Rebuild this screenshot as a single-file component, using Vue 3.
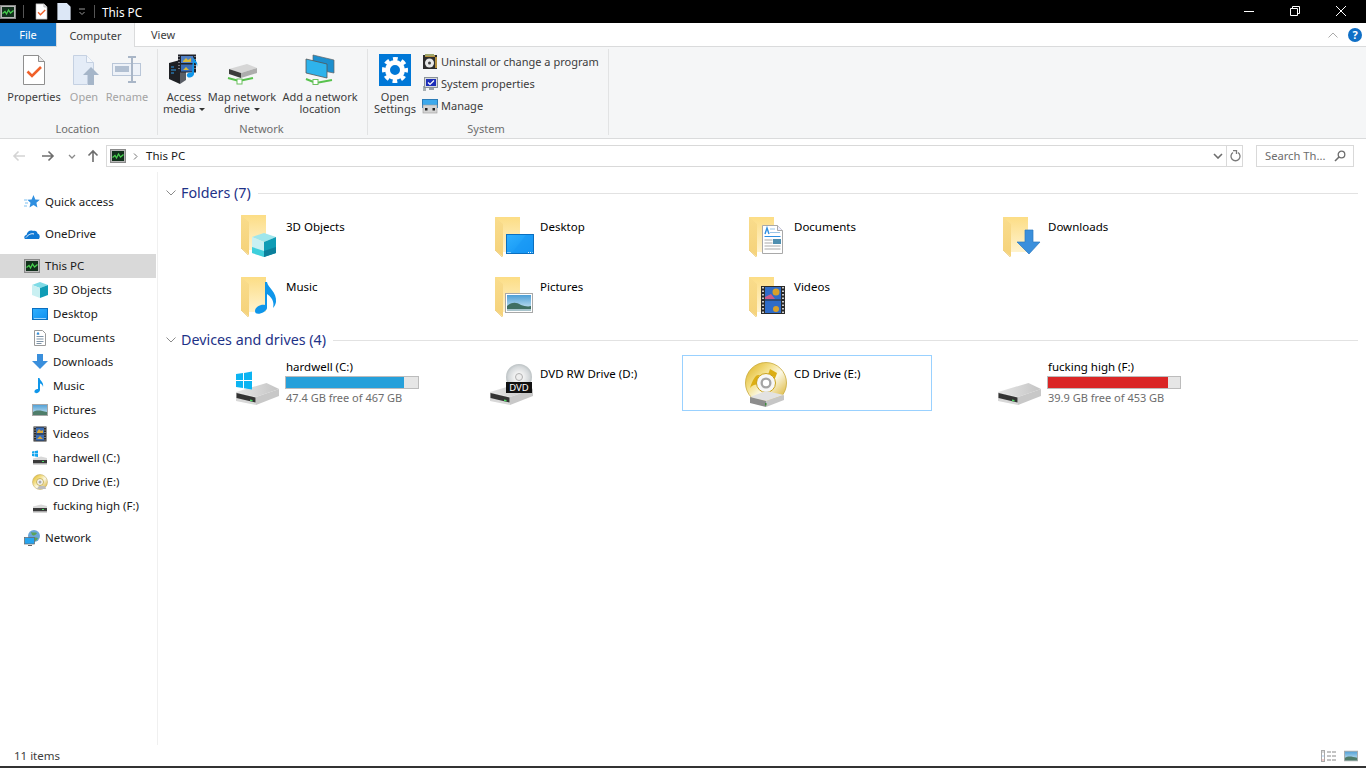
<script setup>
const locationBtns = [
  { icon: "i-props", lines: ["Properties"], w: 56 },
  { icon: "i-open", lines: ["Open"], w: 44, off: true },
  { icon: "i-rename", lines: ["Rename"], w: 42, off: true }
]
const networkBtns = [
  { icon: "i-media", lines: ["Access", "media"], w: 40, caret: true },
  { icon: "i-mapdrive", lines: ["Map network", "drive"], w: 76, caret: true },
  { icon: "i-addnet", lines: ["Add a network", "location"], w: 80 }
]
const systemLinks = [
  { icon: "i-uninstall", label: "Uninstall or change a program" },
  { icon: "i-sysprops", label: "System properties" },
  { icon: "i-manage", label: "Manage" }
]
const navTree = [
  { icon: "s-star", label: "Quick access", top: true },
  { icon: "s-cloud", label: "OneDrive", top: true },
  { icon: "i-monitor", label: "This PC", top: true, selected: true },
  { icon: "s-cube", label: "3D Objects" },
  { icon: "s-desktop", label: "Desktop" },
  { icon: "s-docs", label: "Documents" },
  { icon: "s-down", label: "Downloads" },
  { icon: "s-music", label: "Music" },
  { icon: "s-pics", label: "Pictures" },
  { icon: "s-videos", label: "Videos" },
  { icon: "s-winhdd", label: "hardwell (C:)" },
  { icon: "s-cd", label: "CD Drive (E:)" },
  { icon: "s-hdd", label: "fucking high (F:)" },
  { icon: "s-net", label: "Network", top: true }
]
const folders = [
  { icon: "f-3d", label: "3D Objects" },
  { icon: "f-desktop", label: "Desktop" },
  { icon: "f-docs", label: "Documents" },
  { icon: "f-down", label: "Downloads" },
  { icon: "f-music", label: "Music" },
  { icon: "f-pics", label: "Pictures" },
  { icon: "f-videos", label: "Videos" }
]
const drives = [
  { icon: "d-win", label: "hardwell (C:)", free: "47.4 GB free of 467 GB", pct: 89.5, color: "#26a0da" },
  { icon: "d-dvd", label: "DVD RW Drive (D:)", badge: "DVD" },
  { icon: "d-cd", label: "CD Drive (E:)", focus: true },
  { icon: "d-hdd", label: "fucking high (F:)", free: "39.9 GB free of 453 GB", pct: 91.2, color: "#da2626" }
]
</script>

<template>
  <svg class="sprite" xmlns="http://www.w3.org/2000/svg">
    <defs>
      <linearGradient id="g-folder" x1="0" y1="0" x2="0" y2="1"><stop offset="0" stop-color="#fcdd85" /><stop offset="1" stop-color="#fff3cf" /></linearGradient>
      <linearGradient id="g-flap" x1="0" y1="0" x2="0" y2="1"><stop offset="0" stop-color="#f9dc8c" /><stop offset="1" stop-color="#f5d27a" /></linearGradient>
      <linearGradient id="g-blue" x1="0" y1="0" x2="1" y2="1"><stop offset="0" stop-color="#30b0ff" /><stop offset="1" stop-color="#0e90f0" /></linearGradient>
      <linearGradient id="g-sky" x1="0" y1="0" x2="0" y2="1"><stop offset="0" stop-color="#4e9fd6" /><stop offset="1" stop-color="#d8ecf5" /></linearGradient>
      <linearGradient id="g-hdd" x1="0" y1="0" x2="1" y2="0"><stop offset="0" stop-color="#e6e6e6" /><stop offset="1" stop-color="#c4c4c4" /></linearGradient>
      <linearGradient id="g-gold" x1="0" y1="0" x2="1" y2="1"><stop offset="0" stop-color="#dcae14" /><stop offset="0.35" stop-color="#f4e08a" /><stop offset="0.55" stop-color="#fbf8e6" /><stop offset="1" stop-color="#d6a70f" /></linearGradient>
      <radialGradient id="g-disc"><stop offset="0.3" stop-color="#f4f4f4" /><stop offset="0.8" stop-color="#d4d8da" /><stop offset="1" stop-color="#bcc2c4" /></radialGradient>
    </defs>

    <symbol id="i-monitor" viewBox="0 0 16 16">
      <rect x="0.500" y="1.500" width="15" height="13" fill="#b8b8b8" stroke="#8a8a8a" />
      <rect x="2" y="3" width="12" height="10" fill="#12301c" />
      <path d="M2.500 9.500 5 7.500 6.500 10 8.500 6 10.500 9 13.500 6.500" fill="none" stroke="#49d14f" stroke-width="1.300" />
    </symbol>

    <symbol id="i-props" viewBox="0 0 32 32">
      <path d="M5.500 1.500h15l6 6v23h-21z" fill="#fff" stroke="#8f8f8f" />
      <path d="M20.500 1.500v6h6" fill="#e8e8e8" stroke="#8f8f8f" />
      <path d="M9.500 17.500l4.500 4.500 9-9" fill="none" stroke="#f0612a" stroke-width="2.600" />
    </symbol>
    <symbol id="i-open" viewBox="0 0 32 32">
      <path d="M5.500 1.500h13l7 7v12h-6v10h-14z" fill="#e4ecf7" stroke="#c5d1e2" />
      <path d="M18.500 1.500v7h7" fill="#f4f7fb" stroke="#c5d1e2" />
      <path d="M15 21l8-8 8 8h-5v10h-6V21z" fill="#a6b6c9" />
    </symbol>
    <symbol id="i-rename" viewBox="0 0 32 32">
      <rect x="1.500" y="9.500" width="28" height="12" fill="#eef2f8" stroke="#b9c6d8" />
      <rect x="4" y="12" width="14" height="6" fill="#b2c0d2" />
      <path d="M17 3h8M17 28h8M21 3v25" fill="none" stroke="#a9b6c7" stroke-width="2" />
    </symbol>
    <symbol id="i-media" viewBox="0 0 32 32">
      <path d="M1 9l11-3v24L1 25z" fill="#1e2024" />
      <path d="M12 6l6 3v17l-6 4z" fill="#5a5e66" />
      <path d="M3 13h3M3 16h5M3 19h3" stroke="#2f9be8" />
      <rect x="10" y="0.500" width="18" height="18" fill="#20222a" />
      <rect x="13" y="2" width="12" height="7" fill="#4f7fc4" />
      <rect x="13" y="10.500" width="12" height="7" fill="#3a6db6" />
      <path d="M15 7l3-3 2 2 3-2v4H15zM15 16l3-3 3 3z" fill="#d9b93a" />
      <path d="M11 2v15M27 2v15" stroke="#cfcfcf" stroke-dasharray="1 2" />
      <path d="M25 2c0 4 6 5 4 11 0-3-2-4-3-4.500V20c0 3-6 5-7 2-1-2.500 2-4 5-3.500z" fill="#0f96ea" />
    </symbol>
    <symbol id="i-mapdrive" viewBox="0 0 32 32">
      <path d="M3 15l18-5 10 4-16 5z" fill="#d6d6d6" />
      <path d="M15 19l16-5v5l-16 5z" fill="#adadad" />
      <path d="M3 15l12 4v5L3 20z" fill="#3c3c3c" />
      <path d="M2 24l11 3 14-3" fill="none" stroke="#58c24d" stroke-width="2" />
      <rect x="11" y="25" width="5" height="5" fill="#fff" stroke="#6bbf5f" />
    </symbol>
    <symbol id="i-addnet" viewBox="0 0 32 32">
      <path d="M9 1l21 5v13L9 15z" fill="#1d8fce" stroke="#666" stroke-width="0.700" />
      <path d="M2 5l21 5v14L2 19z" fill="#2eb3ec" stroke="#555" stroke-width="0.800" />
      <path d="M2 25l10 4 16-3" fill="none" stroke="#58c24d" stroke-width="2" />
      <rect x="9" y="25.500" width="5" height="5" fill="#fff" stroke="#6bbf5f" />
    </symbol>
    <symbol id="i-gear" viewBox="0 0 32 32">
      <rect width="32" height="32" fill="#0078d7" />
      <circle cx="16" cy="16" r="7.500" fill="none" stroke="#fff" stroke-width="5" />
      <circle cx="16" cy="16" r="11" fill="none" stroke="#fff" stroke-width="4" stroke-dasharray="4.640 3.999" stroke-dashoffset="2.320" />
    </symbol>
    <symbol id="i-uninstall" viewBox="0 0 16 16">
      <rect x="1" y="1" width="14" height="14" fill="#2c2c2c" />
      <path d="M3 1h10v2H3zM13 3h2v11h-2z" fill="#b48f3c" />
      <rect x="3" y="0" width="9" height="2" fill="#9ea66e" />
      <circle cx="7.500" cy="9" r="4.500" fill="#e8e8e8" />
      <circle cx="7.500" cy="9" r="1.500" fill="#444" />
    </symbol>
    <symbol id="i-sysprops" viewBox="0 0 16 16">
      <rect x="1" y="10" width="3" height="5" fill="#a8b0b4" />
      <rect x="2.500" y="1.500" width="13" height="10" fill="#d6dadd" stroke="#8a9298" />
      <rect x="4" y="3" width="10" height="7" fill="#1c2db8" />
      <path d="M6 6.500l2 2 4-4" fill="none" stroke="#fff" stroke-width="1.200" />
      <rect x="7" y="12" width="5" height="2" fill="#9aa2a8" />
    </symbol>
    <symbol id="i-manage" viewBox="0 0 16 16">
      <rect x="0.500" y="1.500" width="15" height="8" fill="#3da9ec" stroke="#2b7cb8" />
      <rect x="1" y="7" width="14" height="8" fill="#d4d4d4" stroke="#9a9a9a" stroke-width="0.600" />
      <rect x="3" y="10" width="2.500" height="2.500" fill="#222" />
      <rect x="10.500" y="10" width="2.500" height="2.500" fill="#222" />
    </symbol>

    <symbol id="s-star" viewBox="0 0 16 16">
      <path d="M9.500 1l1.800 4.400 4.500.4-3.400 3 1 4.700-3.900-2.500-4 2.500 1-4.700-3.200-3 4.300-.4z" fill="#2f8fe0" />
      <path d="M0 6h3M1 9h3M0 12h3" stroke="#7fc0f0" />
    </symbol>
    <symbol id="s-cloud" viewBox="0 0 16 16">
      <path d="M1 13c-1.500-1.500-.5-4 1.500-4C3 6 6 3.500 9 5c2-1 4.500.5 4.500 2.500 2 .5 3 3 1.500 5.500z" fill="#0f78d4" />
      <path d="M2 11.500C4 9 7 7 10 8" stroke="#fff" fill="none" />
    </symbol>
    <symbol id="s-cube" viewBox="0 0 16 16">
      <path d="M8 0l8 3-8 3-8-3z" fill="#7fdbe6" />
      <path d="M0 3l8 3v10l-8-3z" fill="#c9f0f2" />
      <path d="M16 3l-8 3v10l8-3z" fill="#0f9cb5" />
    </symbol>
    <symbol id="s-desktop" viewBox="0 0 16 16">
      <rect x="0.500" y="2.500" width="15" height="11" fill="url(#g-blue)" stroke="#0a6fc0" />
      <path d="M2 12.500h12" stroke="#bfe4ff" stroke-width="0.800" />
    </symbol>
    <symbol id="s-docs" viewBox="0 0 16 16">
      <path d="M2.500 .5h8l3 3v12h-11z" fill="#fff" stroke="#9a9a9a" />
      <path d="M4.500 4h3M4.500 6.500h7M4.500 9h7M4.500 11.500h7M4.500 13.500h5" stroke="#7f94a8" />
      <path d="M5 3.500h2" stroke="#2f8fe0" stroke-width="2" />
    </symbol>
    <symbol id="s-down" viewBox="0 0 16 16">
      <path d="M5 0h6v7h5l-8 8-8-8h5z" fill="#3a8fdc" />
    </symbol>
    <symbol id="s-music" viewBox="0 0 16 16">
      <path d="M6 0h1.500c.5 3 4.500 4 3.500 9-.3-2-2-3.500-3-3.500V12c0 2.500-5 4.500-5.500 2-.4-2 2-3.500 3.500-3z" fill="#0f96ea" />
    </symbol>
    <symbol id="s-pics" viewBox="0 0 16 16">
      <rect x="0.500" y="2.500" width="15" height="11" fill="url(#g-sky)" stroke="#a8a8a8" />
      <path d="M1 10c4-2.500 8-1.500 14 0v3H1z" fill="#4f7d6a" />
    </symbol>
    <symbol id="s-videos" viewBox="0 0 16 16">
      <rect x="1.500" y="0.500" width="13" height="15" fill="#2a2a2a" />
      <rect x="4" y="1.500" width="8" height="6" fill="#3a6db6" />
      <rect x="4" y="8.500" width="8" height="6" fill="#3a6db6" />
      <path d="M5 6l2-3 2 2 2-1v3H5zM5 13l3-3 3 3z" fill="#d9a83a" />
      <path d="M3 1v14M13 1v14" stroke="#ccc" stroke-dasharray="1 1.500" />
    </symbol>
    <symbol id="s-hdd" viewBox="0 0 16 16">
      <path d="M1 8.500l8-2 6 1.500v3H1z" fill="#d9d9d9" />
      <rect x="1" y="10" width="14" height="4" fill="#3a3a3a" />
      <rect x="1" y="13" width="14" height="1.500" fill="#aaa" />
      <rect x="10" y="11" width="2" height="1" fill="#4cd964" />
    </symbol>
    <symbol id="s-winhdd" viewBox="0 0 16 16">
      <use href="#s-hdd" width="16" height="16" />
      <path d="M0 1.500l2.500-.4v2.500H0zM3 1l3-.5v3H3zM0 4h2.500v2.500L0 6zM3 4h3v3l-3-.5z" fill="#12a5ee" />
    </symbol>
    <symbol id="s-cd" viewBox="0 0 16 16">
      <circle cx="8" cy="8" r="7.500" fill="url(#g-gold)" stroke="#b8a25a" stroke-width="0.500" />
      <circle cx="8" cy="8" r="3.500" fill="#f4f4f4" stroke="#c9b45a" />
      <circle cx="8" cy="8" r="1.500" fill="#a8a8a8" />
      <path d="M5 15l2-3h6l1 3z" fill="#bdbdbd" />
    </symbol>
    <symbol id="s-net" viewBox="0 0 16 16">
      <circle cx="10" cy="6" r="6" fill="#6aa6d8" />
      <path d="M7 2c2 1 4 0 6 1-1 2-3 3-5 2zM10 8c2-1 3 0 4 0-1 2-2 3-3 3z" fill="#5aa35a" />
      <rect x="0.500" y="7.500" width="10" height="6.500" fill="#27a4ee" stroke="#666" stroke-width="0.700" />
      <path d="M4 15.500h4" stroke="#666" />
    </symbol>

    <symbol id="folder" viewBox="0 0 48 48">
      <path d="M9 5h25v35H15z" fill="url(#g-folder)" />
      <path d="M9 5l8 7v33l-8-7z" fill="url(#g-flap)" />
      <path d="M16 45l-7-7" stroke="#e4bd5c" stroke-width="0.600" />
    </symbol>
    <symbol id="f-3d" viewBox="0 0 48 48">
      <use href="#folder" y="-2" width="48" height="48" />
      <path d="M32 21l12 4-12 5-12-5z" fill="#9fe6ec" />
      <path d="M20 25l12 5v15l-12-4z" fill="#c9f0f2" />
      <path d="M20 35l12 4v6l-12-4z" fill="#3ecfdc" />
      <path d="M44 25l-12 5v15l12-4z" fill="#0f9cb5" />
      <path d="M44 35l-12 4v6l12-4z" fill="#0b7f9b" />
    </symbol>
    <symbol id="f-desktop" viewBox="0 0 48 48">
      <use href="#folder" width="48" height="48" />
      <rect x="20.500" y="22.500" width="27" height="19" fill="url(#g-blue)" stroke="#0a6fc0" />
      <path d="M26 41l14-18h7v18z" fill="#1998f5" opacity="0.600" />
      <path d="M21.500 40.500h3M42 40.500h4.500" stroke="#e6f5ff" stroke-dasharray="1 1" />
    </symbol>
    <symbol id="f-docs" viewBox="0 0 48 48">
      <use href="#folder" width="48" height="48" />
      <path d="M22.500 13.500h15l5 5v23h-20z" fill="#fff" stroke="#a9a9a9" />
      <path d="M37.500 13.500v5h5" fill="#eef" stroke="#a9a9a9" />
      <path d="M25 22l2-6 2 6" fill="none" stroke="#2f8fe0" stroke-width="1.400" />
      <path d="M30 17h5M30 20.500h10" stroke="#9ac4e6" />
      <path d="M24.500 24.500h16" stroke="#2f8fe0" />
      <path d="M24.500 28h8M24.500 31h8M24.500 34h16M24.500 37h16" stroke="#a9a9a9" />
      <rect x="33" y="27" width="8" height="5" fill="#4f8fb0" />
    </symbol>
    <symbol id="f-down" viewBox="0 0 48 48">
      <use href="#folder" width="48" height="48" />
      <path d="M31 18h8v12h7L35 42 23 30h8z" fill="#3a8fdc" stroke="#2b78c0" stroke-width="0.700" />
    </symbol>
    <symbol id="f-music" viewBox="0 0 48 48">
      <use href="#folder" width="48" height="48" />
      <path d="M33 10h2c1 6 10 10 9 20-.5 3-2 5-3 6 1-4 1-9-6-14v14c0 4-12 9-12 3 0-4 6-7 10-6z" fill="#0f96ea" />
    </symbol>
    <symbol id="f-pics" viewBox="0 0 48 48">
      <use href="#folder" width="48" height="48" />
      <rect x="19.500" y="21.500" width="27" height="19" fill="#fff" stroke="#a8a8a8" />
      <rect x="21" y="23" width="24" height="16" fill="url(#g-sky)" />
      <path d="M21 34c5-4 9-4 14-1 3 1 7 2 10 1v5H21z" fill="#3f6f62" />
      <path d="M21 37h24v2H21z" fill="#a8c4cc" />
    </symbol>
    <symbol id="f-videos" viewBox="0 0 48 48">
      <use href="#folder" width="48" height="48" />
      <rect x="21" y="14" width="24" height="28" fill="#2a2a2a" />
      <rect x="25" y="15" width="16" height="12.500" fill="#2f6cc8" />
      <rect x="25" y="28.500" width="16" height="12.500" fill="#2f6cc8" />
      <circle cx="36" cy="20" r="3.500" fill="#d8a02a" />
      <path d="M25 25l6-3 4 5H25zM35 37h3v2h-3z" fill="#c85a8a" />
      <circle cx="36" cy="37" r="3" fill="#d8a02a" />
      <path d="M23 15v26M43 15v26" stroke="#ccc" stroke-width="2" stroke-dasharray="1.500 2" />
    </symbol>

    <symbol id="d-hdd" viewBox="0 0 48 48">
      <path d="M4 33l30.500-9L47 30l-23 8z" fill="url(#g-hdd)" />
      <path d="M24 38l23-8v7l-23 9z" fill="#c8c8c8" />
      <path d="M4 33l20 5v8L4 42z" fill="#d8d8d8" />
      <path d="M4.500 34l19 4.500v5L4.500 39z" fill="#333" />
      <path d="M18 40.500l2.500.6v1.400l-2.500-.6z" fill="#4cd964" />
    </symbol>
    <symbol id="d-win" viewBox="0 0 48 48">
      <use href="#d-hdd" width="48" height="48" />
      <path d="M4 15l7-1v7H4zM12 14l8-1.500V21h-8zM4 22h7v7l-7-1zM12 22h8v8.500l-8-1.200z" fill="#0cb4f2" />
    </symbol>
    <symbol id="d-dvd" viewBox="0 0 48 48">
      <use href="#d-hdd" width="48" height="48" />
      <circle cx="33" cy="18" r="13" fill="url(#g-disc)" />
      <circle cx="33" cy="18" r="3.500" fill="#eee" stroke="#b0b0b0" />
      <rect x="20" y="23" width="26" height="11" fill="#111" />
    </symbol>
    <symbol id="d-cd" viewBox="0 0 48 48">
      <circle cx="26" cy="24" r="20.500" fill="url(#g-gold)" stroke="#c8a838" stroke-width="0.800" />
      <path d="M10 29c4-13 9-17 12-9 2 5 6-3 8-10l7 4c-3 10-9 18-14 14-3-2-8-5-13 1z" fill="#dcae14" />
      <circle cx="26" cy="24" r="9.500" fill="#f7f7f7" stroke="#c9a21c" />
      <circle cx="26" cy="24" r="5.500" fill="#a4a4a4" />
      <circle cx="26" cy="24" r="3.200" fill="#fff" />
      <path d="M10 38l16-6 18 4-18 6z" fill="#e2e2e2" />
      <path d="M10 38l16 4v6l-16-4z" fill="#8d8d8d" />
      <path d="M26 42l18-6v5l-18 7z" fill="#c6c6c6" />
      <path d="M25 44h1.500v2.500H25z" fill="#3a8a3a" />
    </symbol>
  </svg>

  <div class="window">
    <div class="titlebar">
      <svg class="ic16 t-mon"><use href="#i-monitor" /></svg>
      <span class="t-sep"></span>
      <svg class="t-doc" viewBox="4 0 24 32"><use href="#i-props" width="32" height="32" /></svg>
      <svg class="t-blank" viewBox="0 0 14 18"><path d="M0 0h10l4 4v14H0z" fill="#dce7f6" /></svg>
      <svg class="t-drop" viewBox="0 0 8 8"><path d="M1 1h6M1.500 4L4 6.500 6.500 4" fill="none" stroke="#999" /></svg>
      <span class="t-sep last"></span>
      <span class="t-name">This PC</span>
      <div class="win-btns">
        <svg class="win-btn" viewBox="0 0 46 23"><path d="M18 11.500h10" stroke="#fff" /></svg>
        <svg class="win-btn" viewBox="0 0 46 23"><path d="M18.500 8.500h7v7h-7zM20.500 8.500v-2h7v7h-2" fill="none" stroke="#fff" /></svg>
        <svg class="win-btn" viewBox="0 0 46 23"><path d="M18 6l10 10M28 6L18 16" stroke="#fff" /></svg>
      </div>
    </div>

    <div class="tabs">
      <div class="tab-file">File</div>
      <div class="tab-active">Computer</div>
      <div class="tab">View</div>
      <svg class="collapse" viewBox="0 0 10 6"><path d="M.5 5.500L5 1l4.500 4.500" fill="none" stroke="#aaa" /></svg>
      <div class="help">?</div>
    </div>

    <div class="ribbon">
      <section class="group g-location">
        <div class="group-body">
          <div v-for="b in locationBtns" :key="b.icon" class="big-btn" :class="{ off: b.off }" :style="{ width: b.w + 'px' }">
            <svg class="ic32"><use :href="'#' + b.icon" /></svg>
            <span v-for="l in b.lines" :key="l">{{ l }}</span>
          </div>
        </div>
        <div class="group-name">Location</div>
      </section>
      <section class="group g-network">
        <div class="group-body">
          <div v-for="b in networkBtns" :key="b.icon" class="big-btn" :style="{ width: b.w + 'px' }">
            <svg class="ic32"><use :href="'#' + b.icon" /></svg>
            <span v-for="(l, i) in b.lines" :key="l">{{ l }}<i v-if="b.caret && i == 1" class="caret"></i></span>
          </div>
        </div>
        <div class="group-name">Network</div>
      </section>
      <section class="group g-system">
        <div class="group-body">
          <div class="big-btn settings">
            <svg class="ic32"><use href="#i-gear" /></svg>
            <span>Open</span>
            <span>Settings</span>
          </div>
          <div class="links">
            <div v-for="l in systemLinks" :key="l.icon" class="link">
              <svg class="ic16"><use :href="'#' + l.icon" /></svg>
              <span>{{ l.label }}</span>
            </div>
          </div>
        </div>
        <div class="group-name">System</div>
      </section>
    </div>

    <div class="addressbar">
      <div class="nav">
        <svg class="nav-arrow" viewBox="0 0 14 12"><path d="M13 6H2M6.500 1.500L2 6l4.500 4.500" fill="none" stroke="#d4d4d4" stroke-width="1.600" /></svg>
        <svg class="nav-arrow fwd" viewBox="0 0 14 12"><path d="M1 6h11M7.500 1.500L12 6l-4.500 4.500" fill="none" stroke="#6d6d6d" stroke-width="1.600" /></svg>
        <svg class="nav-drop" viewBox="0 0 8 5"><path d="M1 1l3 3 3-3" fill="none" stroke="#8a8a8a" stroke-width="1.300" /></svg>
        <svg class="nav-up" viewBox="0 0 12 14"><path d="M6 13V2M1.500 6.500L6 2l4.500 4.500" fill="none" stroke="#6d6d6d" stroke-width="1.600" /></svg>
      </div>
      <div class="address">
        <svg class="ic16"><use href="#i-monitor" /></svg>
        <svg class="crumb" viewBox="0 0 5 7"><path d="M1 .5l3 3-3 3" fill="none" stroke="#777" /></svg>
        <span class="path">This PC</span>
        <svg class="addr-drop" viewBox="0 0 10 6"><path d="M1 1l4 4 4-4" fill="none" stroke="#6d6d6d" stroke-width="1.600" /></svg>
        <div class="refresh">
          <svg viewBox="0 0 12 12" width="12" height="12"><path d="M3 2.500a4.500 4.500 0 1 0 5 0M3 .5h3.500V4" fill="none" stroke="#7a7a7a" stroke-width="1.300" /></svg>
        </div>
      </div>
      <div class="search">
        <span>Search Th...</span>
        <svg viewBox="0 0 12 12" width="12" height="12"><circle cx="7.500" cy="4.500" r="3.300" fill="none" stroke="#6d6d6d" stroke-width="1.300" /><path d="M5 7l-4 4" stroke="#6d6d6d" stroke-width="1.600" /></svg>
      </div>
    </div>

    <div class="main">
      <nav class="sidebar">
        <div v-for="n in navTree" :key="n.label" class="nav-row" :class="{ top: n.top, selected: n.selected }">
          <svg class="ic16"><use :href="'#' + n.icon" /></svg>
          <span>{{ n.label }}</span>
        </div>
      </nav>

      <div class="content">
        <div class="group-head">
          <svg viewBox="0 0 10 6"><path d="M.5 .5L5 5l4.500-4.500" fill="none" stroke="#8a8a8a" /></svg>
          <span>Folders (7)</span>
          <i></i>
        </div>
        <div class="tiles">
          <div v-for="f in folders" :key="f.label" class="tile">
            <svg class="ic48"><use :href="'#' + f.icon" /></svg>
            <div class="tile-text plain">{{ f.label }}</div>
          </div>
        </div>

        <div class="group-head devices">
          <svg viewBox="0 0 10 6"><path d="M.5 .5L5 5l4.500-4.500" fill="none" stroke="#8a8a8a" /></svg>
          <span>Devices and drives (4)</span>
          <i></i>
        </div>
        <div class="tiles">
          <div v-for="d in drives" :key="d.label" class="tile" :class="{ focus: d.focus }">
            <svg class="ic48">
              <use :href="'#' + d.icon" />
              <text v-if="d.badge" x="33" y="32" text-anchor="middle" class="dvd-text">{{ d.badge }}</text>
            </svg>
            <div v-if="d.free" class="tile-text">
              <div class="drive-name">{{ d.label }}</div>
              <div class="bar"><div class="bar-fill" :style="{ width: d.pct + '%', background: d.color }"></div></div>
              <div class="drive-free">{{ d.free }}</div>
            </div>
            <div v-else class="tile-text plain">{{ d.label }}</div>
          </div>
        </div>
      </div>
    </div>

    <div class="statusbar">
      <span>11 items</span>
      <div class="views">
        <svg viewBox="0 0 16 12" width="16" height="12">
          <rect x="0.500" y="0.500" width="3" height="11" fill="#fff" stroke="#aaa" />
          <path d="M6 2h4M11 2h4M6 6h4M11 6h4M6 10h4M11 10h4" stroke="#888" />
          <path d="M1.500 1.500h1v1h-1z" fill="#666" />
          <path d="M1.500 5.500h1v1h-1z" fill="#4a90d9" />
          <path d="M1.500 9.500h1v1h-1z" fill="#c33" />
        </svg>
        <svg viewBox="0 0 14 12" width="14" height="12"><use href="#s-pics" width="14" height="16" y="-2" /></svg>
      </div>
    </div>
    <div class="bottom-edge"></div>
  </div>
</template>

<style scoped>
.sprite {
  position: absolute;
  width: 0;
  height: 0;
}

.window {
  width: 1366px;
  height: 768px;
  display: flex;
  flex-direction: column;
  overflow: hidden;
  background: #fff;
  color: #000;
  font-family: "Noto Sans", sans-serif;
  font-size: 11.5px;
}

svg {
  display: block;
  flex: none;
}

.ic16 { width: 16px; height: 16px; }
.ic32 { width: 32px; height: 32px; }
.ic48 { width: 48px; height: 48px; overflow: visible; }

.dvd-text {
  font-family: "Noto Sans", sans-serif;
  font-size: 9.500px;
  fill: #fff;
}

/* title bar */
.titlebar {
  height: 23px;
  background: #000;
  display: flex;
  align-items: center;
  color: #fff;
  flex: none;
}

.t-sep {
  width: 1px;
  height: 13px;
  background: #555;
  margin: 0 11px 0 7px;
}

.t-sep.last {
  margin: 0 7px 0 8px;
}

.t-doc { width: 13px; height: 17px; }
.t-blank { width: 14px; height: 17px; margin-left: 9px; }
.t-drop { width: 8px; height: 8px; margin-left: 7px; }

.t-name {
  font-size: 11.800px;
}

.win-btns {
  margin-left: auto;
  margin-right: 2px;
  display: flex;
}

.win-btn {
  width: 46px;
  height: 23px;
}

/* tabs */
.tabs {
  height: 23px;
  flex: none;
  display: flex;
  align-items: stretch;
  border-bottom: 1px solid #dadbdc;
  box-sizing: content-box;
  font-size: 11px;
}

.tab-file {
  width: 56px;
  background: #1979ca;
  color: #fff;
  display: flex;
  align-items: center;
  justify-content: center;
}

.tab-active {
  width: 77px;
  background: #f5f6f7;
  border: 1px solid #dadbdc;
  border-top: 0;
  border-bottom: 0;
  margin-bottom: -1px;
  display: flex;
  align-items: center;
  justify-content: center;
  color: #3c3c3c;
}

.tab {
  width: 56px;
  display: flex;
  align-items: center;
  justify-content: center;
  color: #3c3c3c;
}

.collapse {
  width: 10px;
  height: 6px;
  margin: auto 0 auto auto;
}

.help {
  width: 14px;
  height: 14px;
  border-radius: 50%;
  background: #0f6fc6;
  color: #fff;
  font-size: 11px;
  font-weight: 700;
  line-height: 14px;
  text-align: center;
  margin: auto 4px auto 10px;
}

/* ribbon */
.ribbon {
  height: 91px;
  flex: none;
  background: #f5f6f7;
  border-bottom: 1px solid #dadbdc;
  display: flex;
  color: #3c3c3c;
  font-size: 11px;
}

.group {
  display: flex;
  flex-direction: column;
  border-right: 1px solid #e2e3e4;
  margin: 2px 0 3px;
}

.g-location { width: 157px; }
.g-network { width: 209px; }
.g-system { width: 240px; }

.group-body {
  flex: 1;
  display: flex;
  padding: 5px 0 0 6px;
}

.group-name {
  text-align: center;
  color: #6d6d6d;
  line-height: 14px;
  height: 14px;
  margin-bottom: -1px;
  padding-right: 2px;
}

.g-system .group-name {
  padding-right: 4px;
}

.big-btn {
  display: flex;
  flex-direction: column;
  align-items: center;
  line-height: 12px;
  white-space: nowrap;
}

.big-btn .ic32 {
  margin-bottom: 5px;
}

.big-btn.off {
  color: #a3a3a3;
}

.settings {
  width: 42px;
}

.caret {
  display: inline-block;
  width: 0;
  height: 0;
  border: 3px solid transparent;
  border-top: 3px solid #333;
  border-bottom: 0;
  margin-left: 4px;
  vertical-align: 2px;
}

.links {
  margin-left: 6px;
  display: flex;
  flex-direction: column;
  gap: 6px;
}

.link {
  display: flex;
  align-items: center;
  gap: 3px;
  height: 16px;
  white-space: nowrap;
}

.link span {
  padding-bottom: 2px;
}

/* address bar */
.addressbar {
  height: 33px;
  flex: none;
  display: flex;
  align-items: center;
  padding-top: 1px;
  box-sizing: border-box;
}

.nav {
  width: 106px;
  display: flex;
  align-items: center;
  padding-left: 12px;
  box-sizing: border-box;
}

.nav-arrow { width: 14px; height: 12px; }
.nav-arrow.fwd { margin-left: 15px; }
.nav-drop { width: 8px; height: 5px; margin-left: 13px; }
.nav-up { width: 12px; height: 14px; margin-left: 11px; }

.address {
  width: 1137px;
  height: 22px;
  box-sizing: border-box;
  border: 1px solid #d9d9d9;
  display: flex;
  align-items: center;
  padding-left: 3px;
  color: #1a1a1a;
}

.crumb {
  width: 5px;
  height: 7px;
  margin-left: 7px;
}

.path {
  margin-left: 8px;
  flex: 1;
  padding-bottom: 2px;
}

.addr-drop {
  width: 10px;
  height: 6px;
  margin-right: 3px;
}

.refresh {
  width: 16px;
  height: 100%;
  border-left: 1px solid #d9d9d9;
  display: flex;
  align-items: center;
  justify-content: center;
  padding-left: 3px;
  box-sizing: border-box;
}

.search {
  width: 98px;
  height: 22px;
  margin-left: 13px;
  box-sizing: border-box;
  border: 1px solid #d9d9d9;
  display: flex;
  align-items: center;
  justify-content: space-between;
  padding: 0 7px 0 8px;
  color: #6d6d6d;
  white-space: nowrap;
  font-size: 11.200px;
}

.search span {
  padding-bottom: 2px;
}

/* main */
.main {
  flex: 1;
  display: flex;
  min-height: 0;
}

.sidebar {
  width: 158px;
  flex: none;
  box-sizing: border-box;
  border-right: 1px solid #f0f0f0;
  padding: 18px 1px 0 0;
  color: #1a1a1a;
}

.nav-row {
  height: 24px;
  display: flex;
  align-items: center;
  gap: 5px;
  padding-left: 32px;
  white-space: nowrap;
}

.nav-row span {
  padding-bottom: 2px;
}

.nav-row.top {
  padding-left: 24px;
  margin-top: 8px;
}

.nav-row:first-child {
  margin-top: 0;
}

.nav-row.selected {
  background: #d9d9d9;
}

.content {
  flex: 1;
  padding: 11px 8px 0 8px;
}

.group-head {
  height: 20px;
  display: flex;
  align-items: center;
  color: #1e3287;
  font-size: 14.300px;
  margin-bottom: 5px;
}

.group-head span {
  padding-bottom: 2px;
}

.group-head.devices {
  margin-top: 6px;
}

.group-head svg {
  width: 10px;
  height: 6px;
  margin-right: 5px;
}

.group-head i {
  flex: 1;
  height: 1px;
  background: #e2e2e2;
  margin-left: 7px;
}

.tiles {
  display: grid;
  grid-template-columns: repeat(4, 250px);
  column-gap: 4px;
  row-gap: 4px;
  margin-left: 8px;
}

.tile {
  height: 56px;
  box-sizing: border-box;
  display: flex;
  align-items: center;
  border: 1px solid transparent;
  padding-left: 57px;
}

.tile.focus {
  border-color: #99d1ff;
}

.tile-text {
  margin-left: 6px;
  align-self: flex-start;
  padding-top: 2px;
  line-height: 15px;
  white-space: nowrap;
}

.tile-text.plain {
  padding-top: 10px;
}

.drive-name {
  line-height: 18px;
}

.bar {
  width: 134px;
  height: 13px;
  box-sizing: border-box;
  border: 1px solid #bcbcbc;
  background: #e6e6e6;
  margin: 0 0 1px -1px;
}

.bar-fill {
  height: 100%;
}

.drive-free {
  color: #6d6d6d;
  line-height: 16px;
  font-size: 11px;
}

/* status */
.statusbar {
  height: 21px;
  flex: none;
  display: flex;
  align-items: center;
  justify-content: space-between;
  padding: 0 8px 0 14px;
  color: #3c3c3c;
}

.views {
  display: flex;
  gap: 7px;
}

.bottom-edge {
  height: 2px;
  flex: none;
  background: #333;
}
</style>
